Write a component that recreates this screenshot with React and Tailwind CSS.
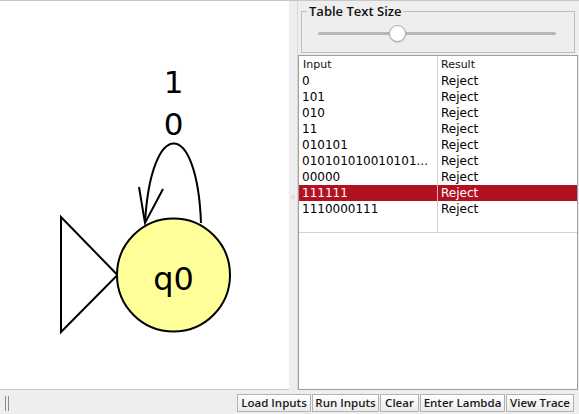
export default function App() {
  const rows = [
    "0",
    "101",
    "010",
    "11",
    "010101",
    "010101010010101...",
    "00000",
    "111111",
    "1110000111",
  ];
  const buttons = [
    ["Load Inputs", "w-[74px]"],
    ["Run Inputs", "w-[67px]"],
    ["Clear", "w-[39px]"],
    ["Enter Lambda", "w-[85px]"],
    ["View Trace", "w-[68px]"],
  ];
  return (
    <div className="w-[579px] h-[414px] bg-[#eeeeee] flex flex-col border-t border-[#c6c6c6] overflow-hidden font-['DejaVu_Sans',sans-serif] text-black">
      <div className="flex h-[389px]">
        {/* canvas */}
        <div className="w-[289px] h-full bg-white border-b border-[#c4c4c4]">
          <svg width="289" height="388" viewBox="0 1 289 388">
            {/* loop */}
            <path
              d="M201 223 C 197 117, 151 117, 145 223"
              fill="none"
              stroke="black"
              strokeWidth="2"
            />
            <path
              d="M139 187 L145 223 L163 189"
              fill="none"
              stroke="black"
              strokeWidth="2"
            />
            {/* start triangle */}
            <path
              d="M61 217 L61 332 L117.5 275 Z"
              fill="white"
              stroke="black"
              strokeWidth="2"
              strokeLinejoin="miter"
            />
            {/* state */}
            <circle
              cx="173.5"
              cy="275"
              r="56.5"
              fill="#ffff99"
              stroke="black"
              strokeWidth="2"
            />
            <text
              x="173.5"
              y="290"
              textAnchor="middle"
              fontFamily="DejaVu Sans, sans-serif"
              fontSize="32"
            >
              q0
            </text>
            <text
              x="173.5"
              y="93"
              textAnchor="middle"
              fontFamily="DejaVu Sans, sans-serif"
              fontSize="31"
            >
              1
            </text>
            <text
              x="173.5"
              y="135"
              textAnchor="middle"
              fontFamily="DejaVu Sans, sans-serif"
              fontSize="31"
            >
              0
            </text>
          </svg>
        </div>
        {/* splitter */}
        <div className="w-[8px] h-full flex items-center justify-center">
          <div className="w-[4px] h-[4px] rounded-full bg-[#dcdcdc] mt-[2px]" />
        </div>
        {/* right panel */}
        <div className="flex-1 h-full border-l border-[#d9d9d9] flex flex-col">
          <fieldset className="ml-[3px] mr-[4px] mt-[2px] border border-[#bdbdbd] px-[5px] h-[50px]">
            <legend className="px-[2px] text-[13px] leading-[16px] font-semibold font-['Open_Sans',sans-serif] text-[#111]">
              Table Text Size
            </legend>
            <div className="relative ml-[11px] w-[238px] mt-[13px] h-[3px] rounded-full bg-[#b7b7b7]">
              <div className="absolute left-[71px] top-[-7px] w-[17px] h-[17px] rounded-full bg-white border border-[#a8a8a8] shadow-[0_1px_1px_rgba(0,0,0,0.15)]" />
            </div>
          </fieldset>
          <div className="mt-[2px] mr-[1px] flex-1 border border-[#9e9e9e] bg-white flex flex-col">
            <div className="flex h-[17px] text-[11px] leading-[17px] text-[#111]">
              <div className="w-[139px] border-r border-[#d2d2d2] pl-[4px]">Input</div>
              <div className="flex-1 pl-[3px]">Result</div>
            </div>
            {rows.map((r, i) => {
              const sel = r === "111111";
              return (
                <div
                  key={i}
                  className={
                    sel
                      ? "flex h-[16px] text-[12px] leading-[16px] bg-[#b2111f] text-white"
                      : "flex h-[16px] text-[12px] leading-[16px]"
                  }
                >
                  <div
                    className={
                      sel
                        ? "w-[139px] border-r border-[#e6b0b4] pl-[3px] whitespace-nowrap overflow-hidden"
                        : "w-[139px] border-r border-[#d2d2d2] pl-[3px] whitespace-nowrap overflow-hidden"
                    }
                  >
                    {r}
                  </div>
                  <div className="flex-1 pl-[3px]">Reject</div>
                </div>
              );
            })}
            <div className="flex h-[16px] border-b border-[#d2d2d2]">
              <div className="w-[139px] border-r border-[#d2d2d2]" />
              <div className="flex-1" />
            </div>
          </div>
        </div>
      </div>
      {/* bottom bar */}
      <div className="flex-1 flex items-center">
        <div className="ml-[5px] flex gap-[2px] h-[15px] mt-[2px]">
          <div className="w-[1px] h-full bg-[#8c8c8c]" />
          <div className="w-[1px] h-full bg-[#8c8c8c]" />
        </div>
        <div className="ml-auto mr-[5px] flex gap-[1px] mt-[1px]">
          {buttons.map(([t, w]) => (
            <div
              key={t}
              className={
                w +
                " h-[18px] border border-[#b3b3b3] bg-gradient-to-b from-white to-[#ebebeb] flex items-center justify-center text-[11.5px] font-semibold font-['Open_Sans',sans-serif] text-[#1a1a1a] whitespace-nowrap"
              }
            >
              {t}
            </div>
          ))}
        </div>
      </div>
    </div>
  );
}
